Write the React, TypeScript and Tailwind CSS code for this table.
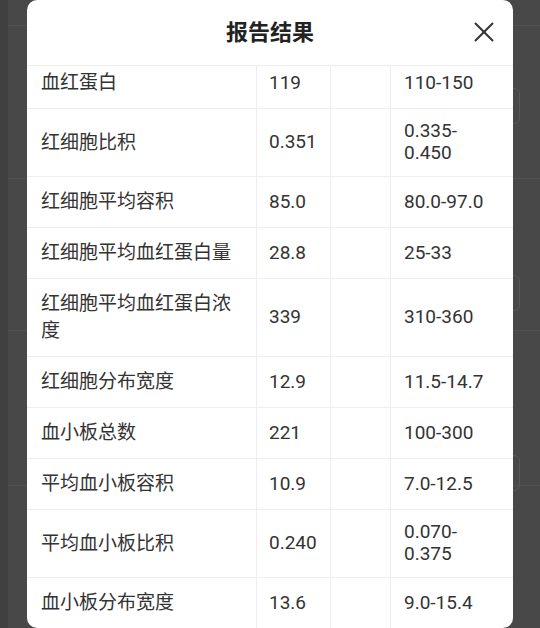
import { X } from "lucide-react";

type Row = { name: string; value: string; flag?: string; range: string };

const rows: Row[] = [
  { name: "血红蛋白", value: "119", range: "110-150" },
  { name: "红细胞比积", value: "0.351", range: "0.335-0.450" },
  { name: "红细胞平均容积", value: "85.0", range: "80.0-97.0" },
  { name: "红细胞平均血红蛋白量", value: "28.8", range: "25-33" },
  { name: "红细胞平均血红蛋白浓度", value: "339", range: "310-360" },
  { name: "红细胞分布宽度", value: "12.9", range: "11.5-14.7" },
  { name: "血小板总数", value: "221", range: "100-300" },
  { name: "平均血小板容积", value: "10.9", range: "7.0-12.5" },
  { name: "平均血小板比积", value: "0.240", range: "0.070-0.375" },
  { name: "血小板分布宽度", value: "13.6", range: "9.0-15.4" },
];

function Backdrop() {
  // faint page content behind the dim layer
  return (
    <div className="absolute inset-0 bg-[#474847]">
      <div className="absolute left-0 top-0 h-full w-[8px] bg-[#3f403f]" />
      {[25, 178, 330, 485].map((y) => (
        <div key={y} className="absolute left-[8px] right-0 h-px bg-[#505150]" style={{ top: y }} />
      ))}
      {[88, 275, 455].map((y) => (
        <div
          key={y}
          className="absolute right-[20px] h-[36px] w-[60px] rounded-[6px] border border-[#575857]"
          style={{ top: y }}
        />
      ))}
    </div>
  );
}

export default function App() {
  return (
    <div className="relative flex h-[628px] w-[540px] justify-center overflow-hidden font-['Roboto','Noto_Sans_CJK_SC',sans-serif] text-[#333333]">
      <Backdrop />
      <div className="relative flex h-[628px] w-[486px] flex-col overflow-hidden rounded-[10px] bg-white">
        <div className="relative flex h-[66px] shrink-0 items-center justify-center border-b border-[#eeeeee]">
          <h2 className="text-[22px] font-bold text-[#222222]">报告结果</h2>
          <button className="absolute right-[12px] top-[15px] text-[#333333]">
            <X className="h-[34px] w-[34px]" strokeWidth={1.4} />
          </button>
        </div>
        <div className="flex-1 overflow-hidden">
          <div className="-mt-[8px] grid grid-cols-[230px_74px_60px_1fr] text-[19px]">
            {rows.map((r) => (
              <div key={r.name} className="contents">
                <div className="flex items-center border-b border-r border-[#eeeeee] py-[11.25px] pl-[14px] pr-[14px] leading-[27.5px]">
                  {r.name}
                </div>
                <div className="flex items-center border-b border-r border-[#eeeeee] px-[12px] py-[11.25px] leading-[22px]">
                  {r.value}
                </div>
                <div className="flex items-center border-b border-r border-[#eeeeee] px-[12px] py-[11.25px] leading-[22px]">
                  {r.flag}
                </div>
                <div className="flex items-center break-words border-b border-[#eeeeee] py-[11.25px] pl-[13px] pr-[24px] leading-[22px]">
                  {r.range}
                </div>
              </div>
            ))}
          </div>
        </div>
      </div>
    </div>
  );
}
